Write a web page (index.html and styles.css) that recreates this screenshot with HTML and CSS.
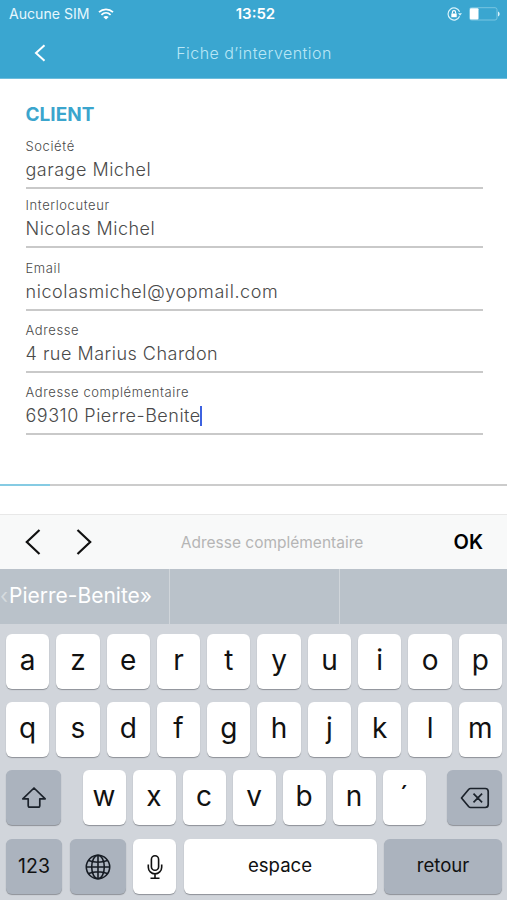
FILE: index.html
```
<!DOCTYPE html>
<html lang="fr">
<head>
<meta charset="utf-8">
<title>Fiche d'intervention</title>
<link rel="stylesheet" href="styles.css">
</head>
<body>
<header class="top">
  <div class="status">
    <div class="carrier"><span class="sim">Aucune SIM</span>
      <svg class="wifi" width="16" height="12" viewBox="0 0 16 12" fill="none" stroke="#fff" stroke-width="1.8"><path d="M1 4.2C5 .4 11 .4 15 4.2M3.400 6.800c2.700-2.500 6.500-2.500 9.200 0"/><path d="M8 11.500 5.300 8.900c1.500-1.300 3.900-1.300 5.400 0z" fill="#fff" stroke="none"/></svg>
    </div>
    <span class="clock">13:52</span>
    <div class="indicators">
      <svg width="15" height="14" viewBox="0 0 15 14" fill="none" stroke="#d9f3fb"><path d="M12.600 9.300A6 6 0 1 1 12.600 4.700" stroke-width="1.200"/><path d="M11 6.300h4l-2 2.500z" fill="#d9f3fb" stroke="none"/><path d="M4.300 6.500h5.400v3.700H4.300z" fill="#fff" stroke="none"/><path d="M5.400 6.500V5.200a1.600 1.600 0 0 1 3.200 0v1.300" stroke="#fff" stroke-width="1.100"/></svg>
      <svg width="31" height="14" viewBox="0 0 31 14"><rect x=".5" y=".7" width="27.500" height="12.300" rx="2" fill="none" stroke="#78c5e1"/><rect x="1" y="1.200" width="8.500" height="11.300" rx="1" fill="#fff"/><path d="M29 4.500c2.200.9 2.200 4 0 5z" fill="#d9f3fb"/></svg>
    </div>
  </div>
  <nav class="nav">
    <svg class="back" width="12" height="18" viewBox="0 0 12 18" fill="none" stroke="#fff" stroke-width="2"><path d="M10.500 1.300 2 9l8.500 7.700"/></svg>
    <h1 class="title">Fiche d’intervention</h1>
  </nav>
</header>
<main class="form">
  <h2 class="section">CLIENT</h2>
  <div class="field f1"><label class="label">Société</label><div class="value">garage Michel</div></div>
  <div class="field f2"><label class="label">Interlocuteur</label><div class="value">Nicolas Michel</div></div>
  <div class="field f3"><label class="label">Email</label><div class="value email">nicolasmichel@yopmail.com</div></div>
  <div class="field f4"><label class="label">Adresse</label><div class="value">4 rue Marius Chardon</div></div>
  <div class="field f5"><label class="label">Adresse complémentaire</label><div class="value">69310 Pierre-Benite<i class="caret"></i></div></div>
</main>
<div class="progress"><div class="done"></div></div>
<div class="accessory">
  <svg class="arrows" width="68" height="26" viewBox="0 0 68 26" fill="none" stroke="#111" stroke-width="2.200"><path d="M14.500 1 1.800 13l12.700 12M52.500 1l12.700 12-12.700 12"/></svg>
  <span class="hint">Adresse complémentaire</span>
  <span class="ok">OK</span>
</div>
<div class="suggest">
  <div class="cell"><span class="dim">‹</span><span>Pierre-Benite»</span></div><div class="cell"></div><div class="cell"></div>
</div>
<div class="keyboard">
  <div class="row ten"><b>a</b><b>z</b><b>e</b><b>r</b><b>t</b><b>y</b><b>u</b><b>i</b><b>o</b><b>p</b></div>
  <div class="row ten"><b>q</b><b>s</b><b>d</b><b>f</b><b>g</b><b>h</b><b>j</b><b>k</b><b>l</b><b>m</b></div>
  <div class="row third">
    <b class="dark icon"><svg width="26" height="24" viewBox="0 0 26 24" fill="none" stroke="#1b222b" stroke-width="1.700" stroke-linejoin="round"><path d="M13 2 1.800 12.800h5.400v6.700q0 1.700 1.700 1.700h8.200q1.700 0 1.700-1.700v-6.700h5.400z"/></svg></b>
    <div class="letters"><b>w</b><b>x</b><b>c</b><b>v</b><b>b</b><b>n</b><b>´</b></div>
    <b class="dark icon"><svg width="30" height="22" viewBox="0 0 30 22" fill="none" stroke="#1b222b" stroke-width="1.700" stroke-linejoin="round"><path d="M10.500 1.500h14.700q3 0 3 3v13q0 3-3 3H10.500Q9.500 20.500 8.600 19.500L1.500 11 8.600 2.500Q9.500 1.500 10.500 1.500zM13.500 6.700l8.600 8.600M22.100 6.700l-8.600 8.600"/></svg></b>
  </div>
  <div class="row bottom">
    <b class="dark num">123</b>
    <b class="dark icon"><svg width="26" height="26" viewBox="0 0 26 26" fill="none" stroke="#151b23" stroke-width="1.600"><circle cx="13" cy="13" r="11.700"/><ellipse cx="13" cy="13" rx="6.300" ry="11.700"/><path d="M13 1v24M1 13h24M3.500 6.500Q13 10 22.500 6.500M3.500 19.500Q13 16 22.500 19.500"/></svg></b>
    <b class="icon"><svg width="16" height="26" viewBox="0 0 16 26" fill="none" stroke="#111" stroke-width="1.600"><rect x="4.400" y="1.800" width="7.200" height="14.500" rx="3.600"/><path d="M1.300 10.500v2.700a6.700 6.700 0 0 0 13.400 0v-2.700M8 20v4M3.500 24.200h9"/></svg></b>
    <b class="word-key">espace</b>
    <b class="dark word-key">retour</b>
  </div>
</div>
</body>
</html>
```
FILE: styles.css
```
* { box-sizing: border-box; }
body { margin: 0; width: 507px; height: 900px; overflow: hidden; background: #fff; font-family: Inter, "Liberation Sans", sans-serif; color: #4a4a4a; }
.top { height: 79px; background: #3aa6d0; color: #fff; border-bottom: 1px solid #6dbddc; }
.status { height: 27px; display: grid; grid-template-columns: 1fr auto 1fr; align-items: center; padding: 0 7px 0 9px; }
.carrier { display: flex; align-items: center; gap: 8px; }
.sim { font-size: 14.1px; color: #e6f7fd; }
.clock { font-size: 15px; font-weight: 600; padding-left: 2px; }
.indicators { display: flex; justify-content: flex-end; align-items: center; gap: 7px; }
.nav { height: 51px; display: grid; grid-template-columns: 100px 1fr 100px; align-items: center; }
.back { margin-left: 34px; }
.title { margin: 0; padding-left: 1px; text-align: center; font-size: 16px; font-weight: 300; letter-spacing: .45px; color: #b9e6f6; }
.form { height: 405px; padding: 25px 24.500px 0 25.500px; }
.section { margin: 0; height: 22px; line-height: 22px; font-size: 19px; font-weight: 700; color: #3ba5cd; }
.field { border-bottom: 2px solid #c9c9c9; display: flex; flex-direction: column; justify-content: flex-end; }
.f1 { height: 63px; }
.f2 { height: 59px; }
.f3 { height: 63px; }
.f4 { height: 62px; }
.f5 { height: 62px; }
.label { font-size: 13px; line-height: 18px; font-weight: 300; letter-spacing: .6px; }
.value { height: 32px; padding-top: 2px; line-height: 26px; font-size: 18px; font-weight: 300; letter-spacing: .5px; display: flex; }
.email { letter-spacing: .58px; }
.caret { width: 2px; height: 20px; margin: 3px 0 0 -1px; background: #3d62e0; }
.progress { height: 2px; background: #ccc; }
.done { width: 50px; height: 2px; background: #86cbe3; }
.accessory { margin-top: 28px; height: 55px; border-top: 1px solid #e8e8e8; background: #f8f9f9; display: grid; grid-template-columns: 172px 200px 1fr; align-items: center; }
.arrows { margin-left: 25px; }
.hint { text-align: center; font-size: 15.5px; color: #b5b5b5; }
.ok { justify-self: end; margin-right: 24px; font-size: 20px; font-weight: 600; color: #000; }
.suggest { height: 55px; background: #bac2ca; display: grid; grid-template-columns: 170px 170px 1fr; }
.cell { border-right: 1px solid #d0d5da; display: flex; align-items: center; font-size: 21px; color: #fff; padding-bottom: 3px; }
.cell:last-child { border: 0; }
.dim { color: #d5dade; width: 9px; }
.keyboard { height: 276px; background: #d1d5db; padding: 9.800px 5px 0 6px; display: grid; grid-template-rows: repeat(4, 56px); row-gap: 12.300px; }
.row { display: grid; }
.row b { height: 55px; border-radius: 6px; background: #fff; box-shadow: 0 1px 1px #8d9197; color: #111; font-weight: 400; font-size: 28px; display: flex; align-items: center; justify-content: center; padding-bottom: 3px; }
.row .icon { padding: 1px 0 0; }
.row b.dark { background: #abb3be; }
.ten { grid-template-columns: repeat(10, 1fr); column-gap: 7px; }
.third { grid-template-columns: 55px 343px 55px; justify-content: space-between; }
.letters { display: grid; grid-template-columns: repeat(7, 1fr); column-gap: 7px; }
.bottom { grid-template-columns: 56px 56px 43px 193px 118px; justify-content: space-between; }
.row .num { font-size: 19.5px; padding-bottom: 1px; }
.row .word-key { font-size: 18.6px; }
```
